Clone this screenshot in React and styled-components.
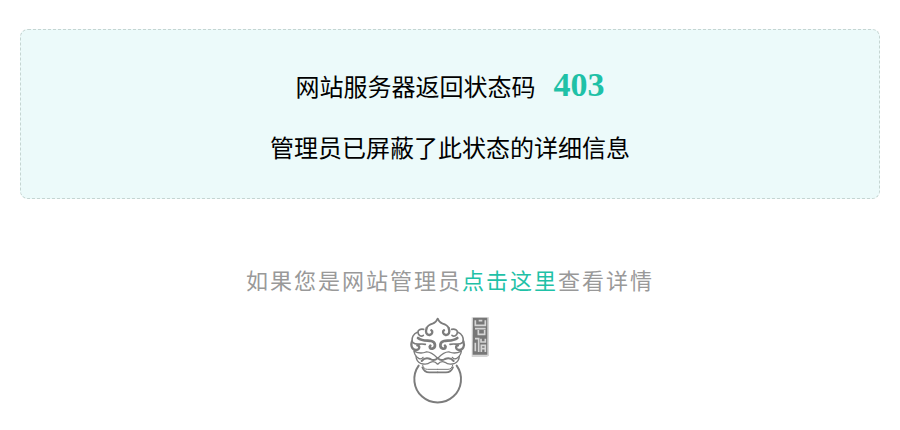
import React from "react";
import styled, { createGlobalStyle } from "styled-components";

const GlobalStyle = createGlobalStyle`
  body {
    margin: 0;
    background: #fff;
    color: #000;
    font-family: "Noto Sans CJK SC", sans-serif;
  }
`;

const Page = styled.main`
  display: flex;
  flex-direction: column;
  padding: 29px 20px 24px;
`;

const StatusPanel = styled.section`
  display: flex;
  flex-direction: column;
  align-items: center;
  gap: 22px;
  padding: 35px 20px 32px;
  border: 1px dashed #c5d5d2;
  border-radius: 8px;
  background: #ecfafa;
  text-align: center;
`;

const Message = styled.p`
  display: flex;
  align-items: baseline;
  justify-content: center;
  gap: 18px;
  margin: 0;
  font-size: 24px;
  line-height: 39px;
`;

const StatusCode = styled.strong`
  color: #1fc1a7;
  font-family: "Liberation Serif", serif;
  font-size: 34px;
`;

const Footer = styled.footer`
  display: flex;
  flex-direction: column;
  align-items: center;
  gap: 21px;
  margin-top: 64px;
`;

const Hint = styled.p`
  margin: 0;
  color: #999;
  font-size: 22px;
  line-height: 32px;
  letter-spacing: 2px;
  text-align: center;
`;

const DetailLink = styled.a`
  color: #1fc1a7;
  text-decoration: none;
`;

const Emblem = styled.svg`
  display: block;
  width: 80px;
  height: 88px;
`;

function HalfMask() {
  return (
    <g>
      <path d="M113 26 Q108 38 98 41 Q84 45 80 54" strokeWidth="5" />
      <path d="M80 54 C75 67 80 76 89 75 C98 73 99 64 94 61" strokeWidth="7" />
      <path d="M71 58 C61 56 53 60 54 68 C55 77 64 81 70 76" strokeWidth="5" />
      <path d="M52 67 C40 72 35 84 36 94" strokeWidth="5" />
      <path d="M54 84 C66 94 82 91 94 93 C108 96 108 113 97 116 C90 117 87 111 91 107" strokeWidth="8" />
      <path d="M39 98 C48 107 62 99 76 103" strokeWidth="5" />
      <path d="M36 94 C31 108 37 121 49 120 C60 119 60 107 52 106" strokeWidth="7" />
      <path d="M43 124 Q61 133 78 126 Q92 124 112 144" strokeWidth="4" />
      <path d="M42 123 Q43 137 56 145 Q64 149 69 142" strokeWidth="4" />
      <path d="M65 153 Q76 140 91 147 Q103 154 112 145" strokeWidth="6" />
      <path d="M48 139 Q49 155 62 160 Q80 166 91 157 Q103 151 112 162" strokeWidth="4" />
      <path d="M68 166 Q71 178 82 178 H113" strokeWidth="3" />
      <path d="M67 172 Q73 187 88 187 H113" strokeWidth="5" />
    </g>
  );
}

function LionKnocker() {
  return (
    <Emblem viewBox="30 18 240 264" role="img" aria-label="云锁">
      <g fill="none" stroke="#7c7c7c" strokeLinecap="round" strokeLinejoin="round">
        <HalfMask />
        <g transform="translate(226 0) scale(-1 1)">
          <HalfMask />
        </g>
        <path d="M56 167 A70 70 0 1 0 170 167" strokeWidth="6" />
      </g>
      <path d="M215 22 H267 V137 L260 141 H215 Z" fill="#d5d5d5" />
      <path d="M219 23 H262 V134 H218 Z" fill="#777" />
      <g fill="none" stroke="#d5d5d5" strokeWidth="5">
        <path d="M226 31 V46 H256 V31 M236 32 H247" />
        <path d="M225 56 H257 M235 60 V73 H254 V60" />
        <path d="M225 86 H236 V126 M226 98 V124 M243 86 V96 H256 V86 M244 126 V106 H256 V126 M244 116 H256" />
      </g>
    </Emblem>
  );
}

export default function App() {
  return (
    <>
      <GlobalStyle />
      <Page>
        <StatusPanel>
          <Message>
            <span>网站服务器返回状态码</span>
            <StatusCode>403</StatusCode>
          </Message>
          <Message>管理员已屏蔽了此状态的详细信息</Message>
        </StatusPanel>
        <Footer>
          <Hint>
            如果您是网站管理员<DetailLink href="#details">点击这里</DetailLink>查看详情
          </Hint>
          <LionKnocker />
        </Footer>
      </Page>
    </>
  );
}
